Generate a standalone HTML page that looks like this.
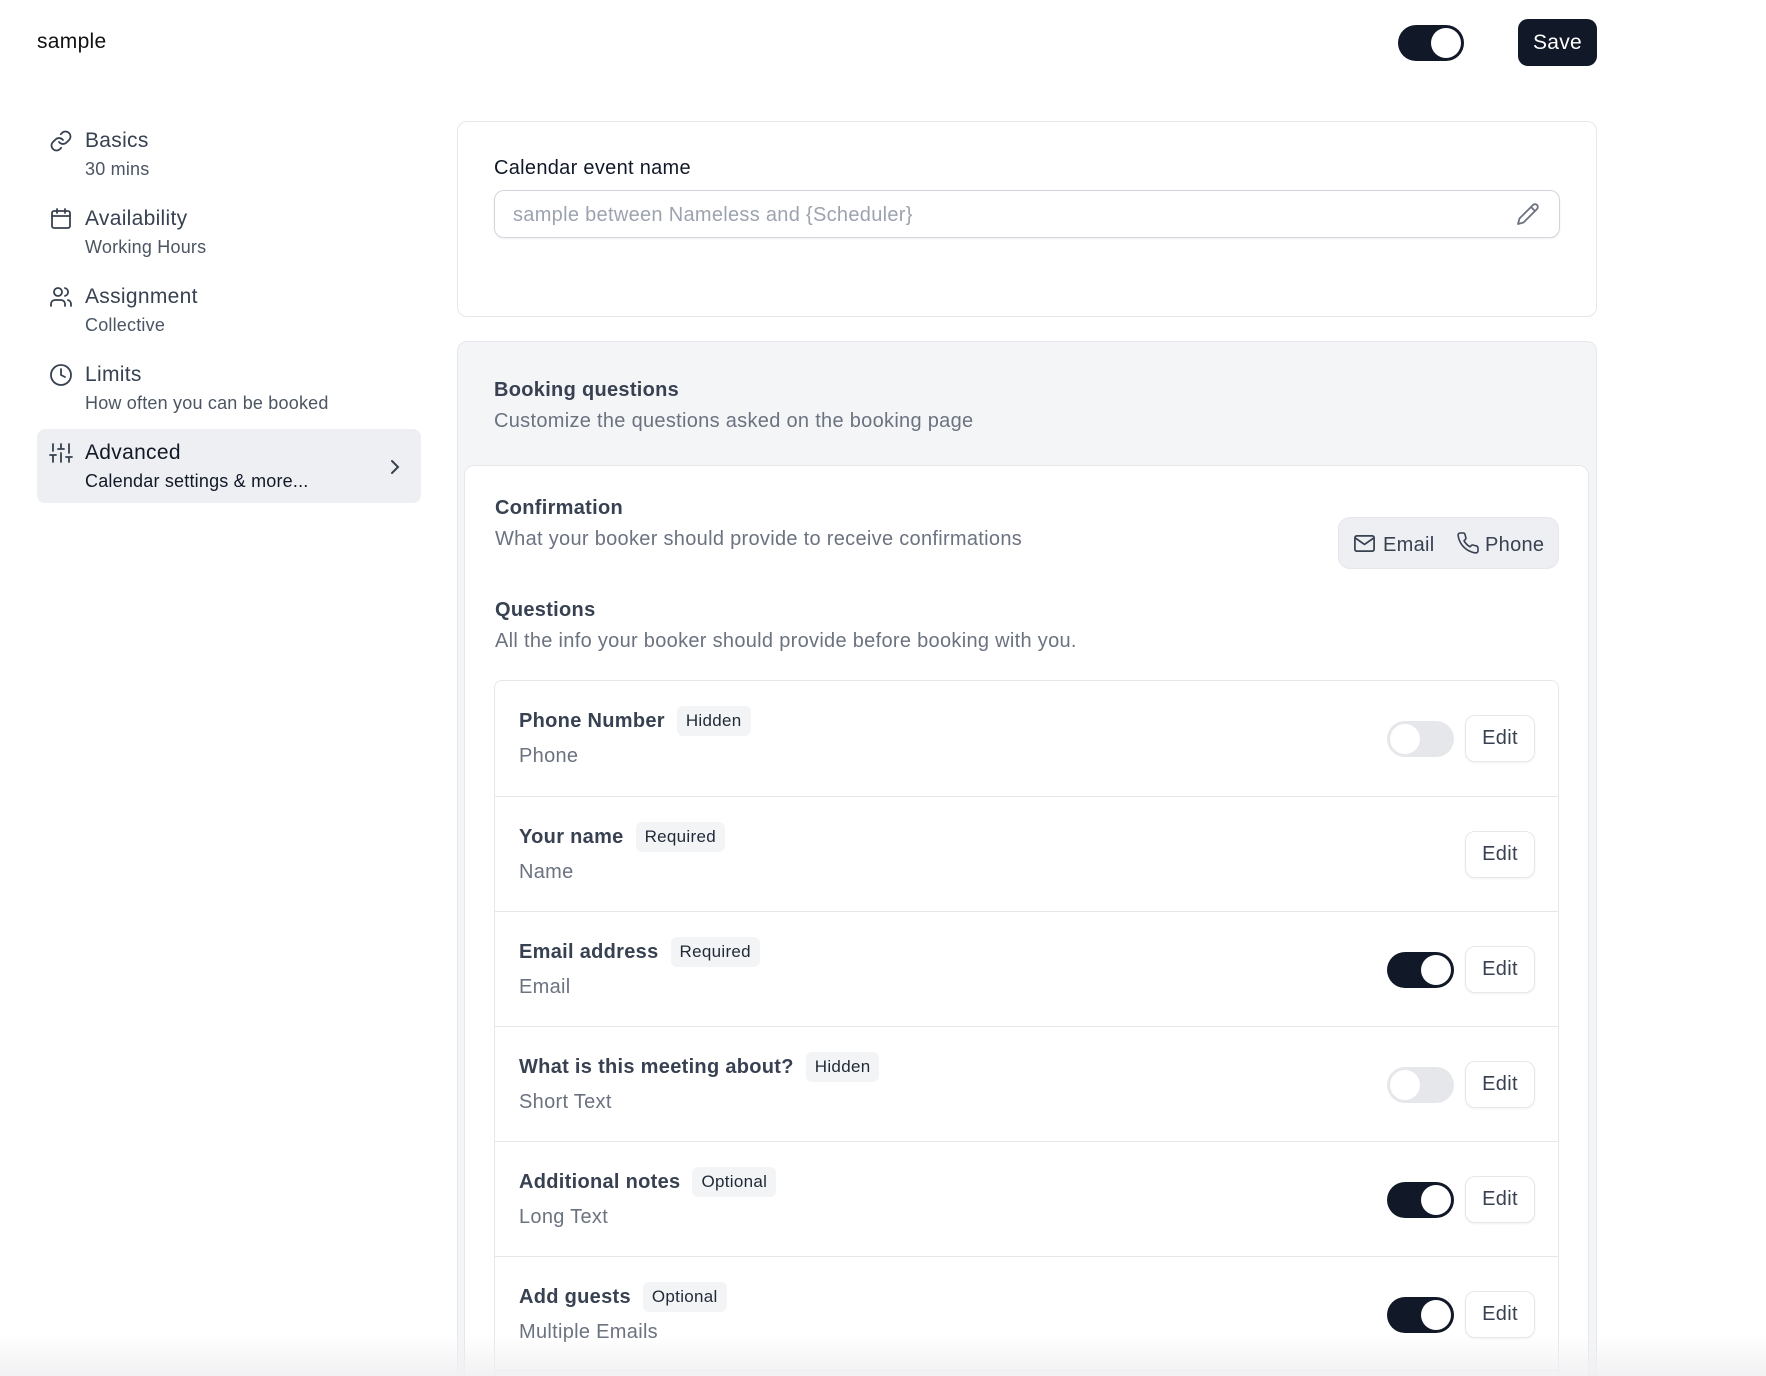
<!DOCTYPE html>
<html style="height:1376px;overflow:hidden"><head><meta charset="utf-8"><style>
*{box-sizing:border-box;margin:0;padding:0}
html,body{width:1766px;height:1376px;overflow:hidden}
body{background:#fff;font-family:"Liberation Sans",sans-serif;color:#1f2937;position:relative;letter-spacing:0.3px}
#wrap{position:absolute;left:0;top:0;width:1766px;height:1376px;overflow:hidden}
.a{position:absolute}
.nt{font-size:21px;color:#374151}
.ns{font-size:18px;color:#4b5563;letter-spacing:0.2px}
.ic{position:absolute;left:49px;width:24px;height:24px;fill:none;stroke:#374151;stroke-width:1.8;stroke-linecap:round;stroke-linejoin:round}
.card{position:absolute;border:1px solid #e5e7eb;border-radius:10px}
.row{position:absolute;left:0;right:0;height:115px;border-top:1px solid #e5e7eb}
.row:first-child{border-top:none}
.qt{position:absolute;left:24px;top:25px;font-size:20px;font-weight:bold;color:#374151;display:flex;align-items:center}
.badge{font-size:17px;font-weight:normal;color:#1f2937;background:#f3f4f6;border-radius:6px;padding:5px 9px;margin-left:12px}
.qs{position:absolute;left:24px;top:64px;font-size:20px;color:#6b7280}
.edit{position:absolute;left:970px;top:34px;width:70px;height:47px;border:1px solid #e5e7eb;border-radius:10px;font-size:20px;color:#374151;display:flex;align-items:center;justify-content:center;box-shadow:0 1px 2px rgba(0,0,0,.06)}
.tg{position:absolute;left:892px;top:40px;width:67px;height:36px;border-radius:18px}
.tg.on{background:#111827}.tg.off{background:#e5e7eb}
.tg::after{content:"";position:absolute;top:3px;width:30px;height:30px;border-radius:50%;background:#fff}
.tg.on::after{right:3px}.tg.off::after{left:3px}
</style></head><body><div id="wrap">
<div class="a" style="left:37px;top:30px;font-size:21px;color:#111">sample</div>
<div class="a" style="left:1398px;top:25px;width:66px;height:36px;border-radius:18px;background:#111827"><div class="a" style="right:3px;top:3px;width:30px;height:30px;border-radius:50%;background:#fff"></div></div>
<div class="a" style="left:1518px;top:19px;width:79px;height:47px;border-radius:10px;background:#111827;color:#fff;font-size:21px;display:flex;align-items:center;justify-content:center">Save</div>

<svg class="ic" style="top:129px" viewBox="0 0 24 24"><path d="M10 13a5 5 0 0 0 7.5.5l3-3a5 5 0 0 0-7-7l-1.7 1.7"/><path d="M14 11a5 5 0 0 0-7.5-.5l-3 3a5 5 0 0 0 7 7l1.7-1.7"/></svg>
<div class="a nt" style="left:85px;top:129px">Basics</div>
<div class="a ns" style="left:85px;top:159px">30 mins</div>
<svg class="ic" style="top:207px" viewBox="0 0 24 24"><rect x="3" y="4" width="18" height="17" rx="2"/><path d="M3 9h18M8 2v4M16 2v4"/></svg>
<div class="a nt" style="left:85px;top:207px">Availability</div>
<div class="a ns" style="left:85px;top:237px">Working Hours</div>
<svg class="ic" style="top:285px" viewBox="0 0 24 24"><circle cx="9" cy="7" r="4"/><path d="M2 21v-2a4 4 0 0 1 4-4h6a4 4 0 0 1 4 4v2M16 3.1a4 4 0 0 1 0 7.8M22 21v-2a4 4 0 0 0-3-3.9"/></svg>
<div class="a nt" style="left:85px;top:285px">Assignment</div>
<div class="a ns" style="left:85px;top:315px">Collective</div>
<svg class="ic" style="top:363px" viewBox="0 0 24 24"><circle cx="12" cy="12" r="10"/><path d="M12 6v6l4 2"/></svg>
<div class="a nt" style="left:85px;top:363px">Limits</div>
<div class="a ns" style="left:85px;top:393px">How often you can be booked</div>
<div class="a" style="left:37px;top:429px;width:384px;height:74px;background:#eeeff2;border-radius:8px"></div>
<svg class="ic" style="top:441px" viewBox="0 0 24 24"><path d="M4 21v-7M4 10V3M12 21v-9M12 8V3M20 21v-5M20 12V3M1 14h6M9 8h6M17 16h6"/></svg>
<div class="a nt" style="left:85px;top:441px;color:#111827">Advanced</div>
<div class="a ns" style="left:85px;top:471px;color:#111827">Calendar settings &amp; more...</div>
<svg class="a" style="left:383px;top:455px;width:24px;height:24px;fill:none;stroke:#374151;stroke-width:2;stroke-linecap:round" viewBox="0 0 24 24"><path d="M9 6l6 6-6 6"/></svg>

<div class="card" style="left:457px;top:121px;width:1140px;height:196px"></div>
<div class="a" style="left:494px;top:157px;font-size:20px;color:#111827">Calendar event name</div>
<div class="a" style="left:494px;top:190px;width:1066px;height:48px;border:1px solid #d1d5db;border-radius:10px;box-shadow:0 1px 2px rgba(0,0,0,.06)"></div>
<div class="a" style="left:513px;top:204px;font-size:20px;color:#9ca3af">sample between Nameless and {Scheduler}</div>
<svg class="a" style="left:1516px;top:202px;width:24px;height:24px;fill:none;stroke:#6b7280;stroke-width:1.8;stroke-linecap:round;stroke-linejoin:round" viewBox="0 0 24 24"><path d="M17 3a2.8 2.8 0 1 1 4 4L7.5 20.5 2 22l1.5-5.5Z"/><path d="M15 5l4 4"/></svg>

<div class="a" style="left:457px;top:341px;width:1140px;height:1035px;background:#f4f5f7;border:1px solid #e5e7eb;border-bottom:none;border-radius:10px 10px 0 0"></div>
<div class="a" style="left:494px;top:379px;font-size:20px;font-weight:bold;color:#374151">Booking questions</div>
<div class="a" style="left:494px;top:410px;font-size:20px;color:#6b7280">Customize the questions asked on the booking page</div>
<div class="a" style="left:464px;top:465px;width:1125px;height:911px;background:#fff;border:1px solid #e5e7eb;border-bottom:none;border-radius:10px 10px 0 0"></div>
<div class="a" style="left:495px;top:497px;font-size:20px;font-weight:bold;color:#374151">Confirmation</div>
<div class="a" style="left:495px;top:528px;font-size:20px;color:#6b7280">What your booker should provide to receive confirmations</div>
<div class="a" style="left:1338px;top:517px;width:221px;height:52px;background:#eeeff2;border:1px solid #e5e7eb;border-radius:12px;font-size:20px;color:#374151">
<svg class="a" style="left:14px;top:14px;width:23px;height:23px;fill:none;stroke:#374151;stroke-width:1.8;stroke-linejoin:round" viewBox="0 0 24 24"><rect x="2" y="4" width="20" height="16" rx="2"/><path d="M2 6l10 7 10-7"/></svg>
<div class="a" style="left:44px;top:16px">Email</div>
<svg class="a" style="left:117px;top:13px;width:24px;height:24px;fill:none;stroke:#374151;stroke-width:1.6;stroke-linejoin:round" viewBox="0 0 24 24"><path d="M22 16.9v3a2 2 0 0 1-2.2 2 19.8 19.8 0 0 1-8.6-3.1 19.5 19.5 0 0 1-6-6A19.8 19.8 0 0 1 2.1 4.2 2 2 0 0 1 4.1 2h3a2 2 0 0 1 2 1.7c.1.9.4 1.8.7 2.7a2 2 0 0 1-.5 2.1L8 9.8a16 16 0 0 0 6 6l1.3-1.3a2 2 0 0 1 2.1-.4c.9.3 1.8.6 2.7.7a2 2 0 0 1 1.7 2z"/></svg>
<div class="a" style="left:146px;top:16px">Phone</div>
</div>
<div class="a" style="left:495px;top:599px;font-size:20px;font-weight:bold;color:#374151">Questions</div>
<div class="a" style="left:495px;top:630px;font-size:20px;color:#6b7280">All the info your booker should provide before booking with you.</div>

<div class="a" style="left:494px;top:680px;width:1065px;height:696px;border:1px solid #e5e7eb;border-bottom:none;border-radius:8px 8px 0 0;overflow:hidden">
<div class="row" style="top:0"><div class="qt">Phone Number<span class="badge">Hidden</span></div><div class="qs">Phone</div><div class="tg off"></div><div class="edit">Edit</div></div>
<div class="row" style="top:115px"><div class="qt">Your name<span class="badge">Required</span></div><div class="qs">Name</div><div class="edit">Edit</div></div>
<div class="row" style="top:230px"><div class="qt">Email address<span class="badge">Required</span></div><div class="qs">Email</div><div class="tg on"></div><div class="edit">Edit</div></div>
<div class="row" style="top:345px"><div class="qt">What is this meeting about?<span class="badge">Hidden</span></div><div class="qs">Short Text</div><div class="tg off"></div><div class="edit">Edit</div></div>
<div class="row" style="top:460px"><div class="qt">Additional notes<span class="badge">Optional</span></div><div class="qs">Long Text</div><div class="tg on"></div><div class="edit">Edit</div></div>
<div class="row" style="top:575px;height:115px;border-bottom:1px solid #e5e7eb"><div class="qt">Add guests<span class="badge">Optional</span></div><div class="qs">Multiple Emails</div><div class="tg on"></div><div class="edit">Edit</div></div>
</div>
<div class="a" style="left:0;top:1336px;width:1766px;height:40px;background:linear-gradient(rgba(255,255,255,0),rgba(240,240,242,.9))"></div>
</div></body></html>
